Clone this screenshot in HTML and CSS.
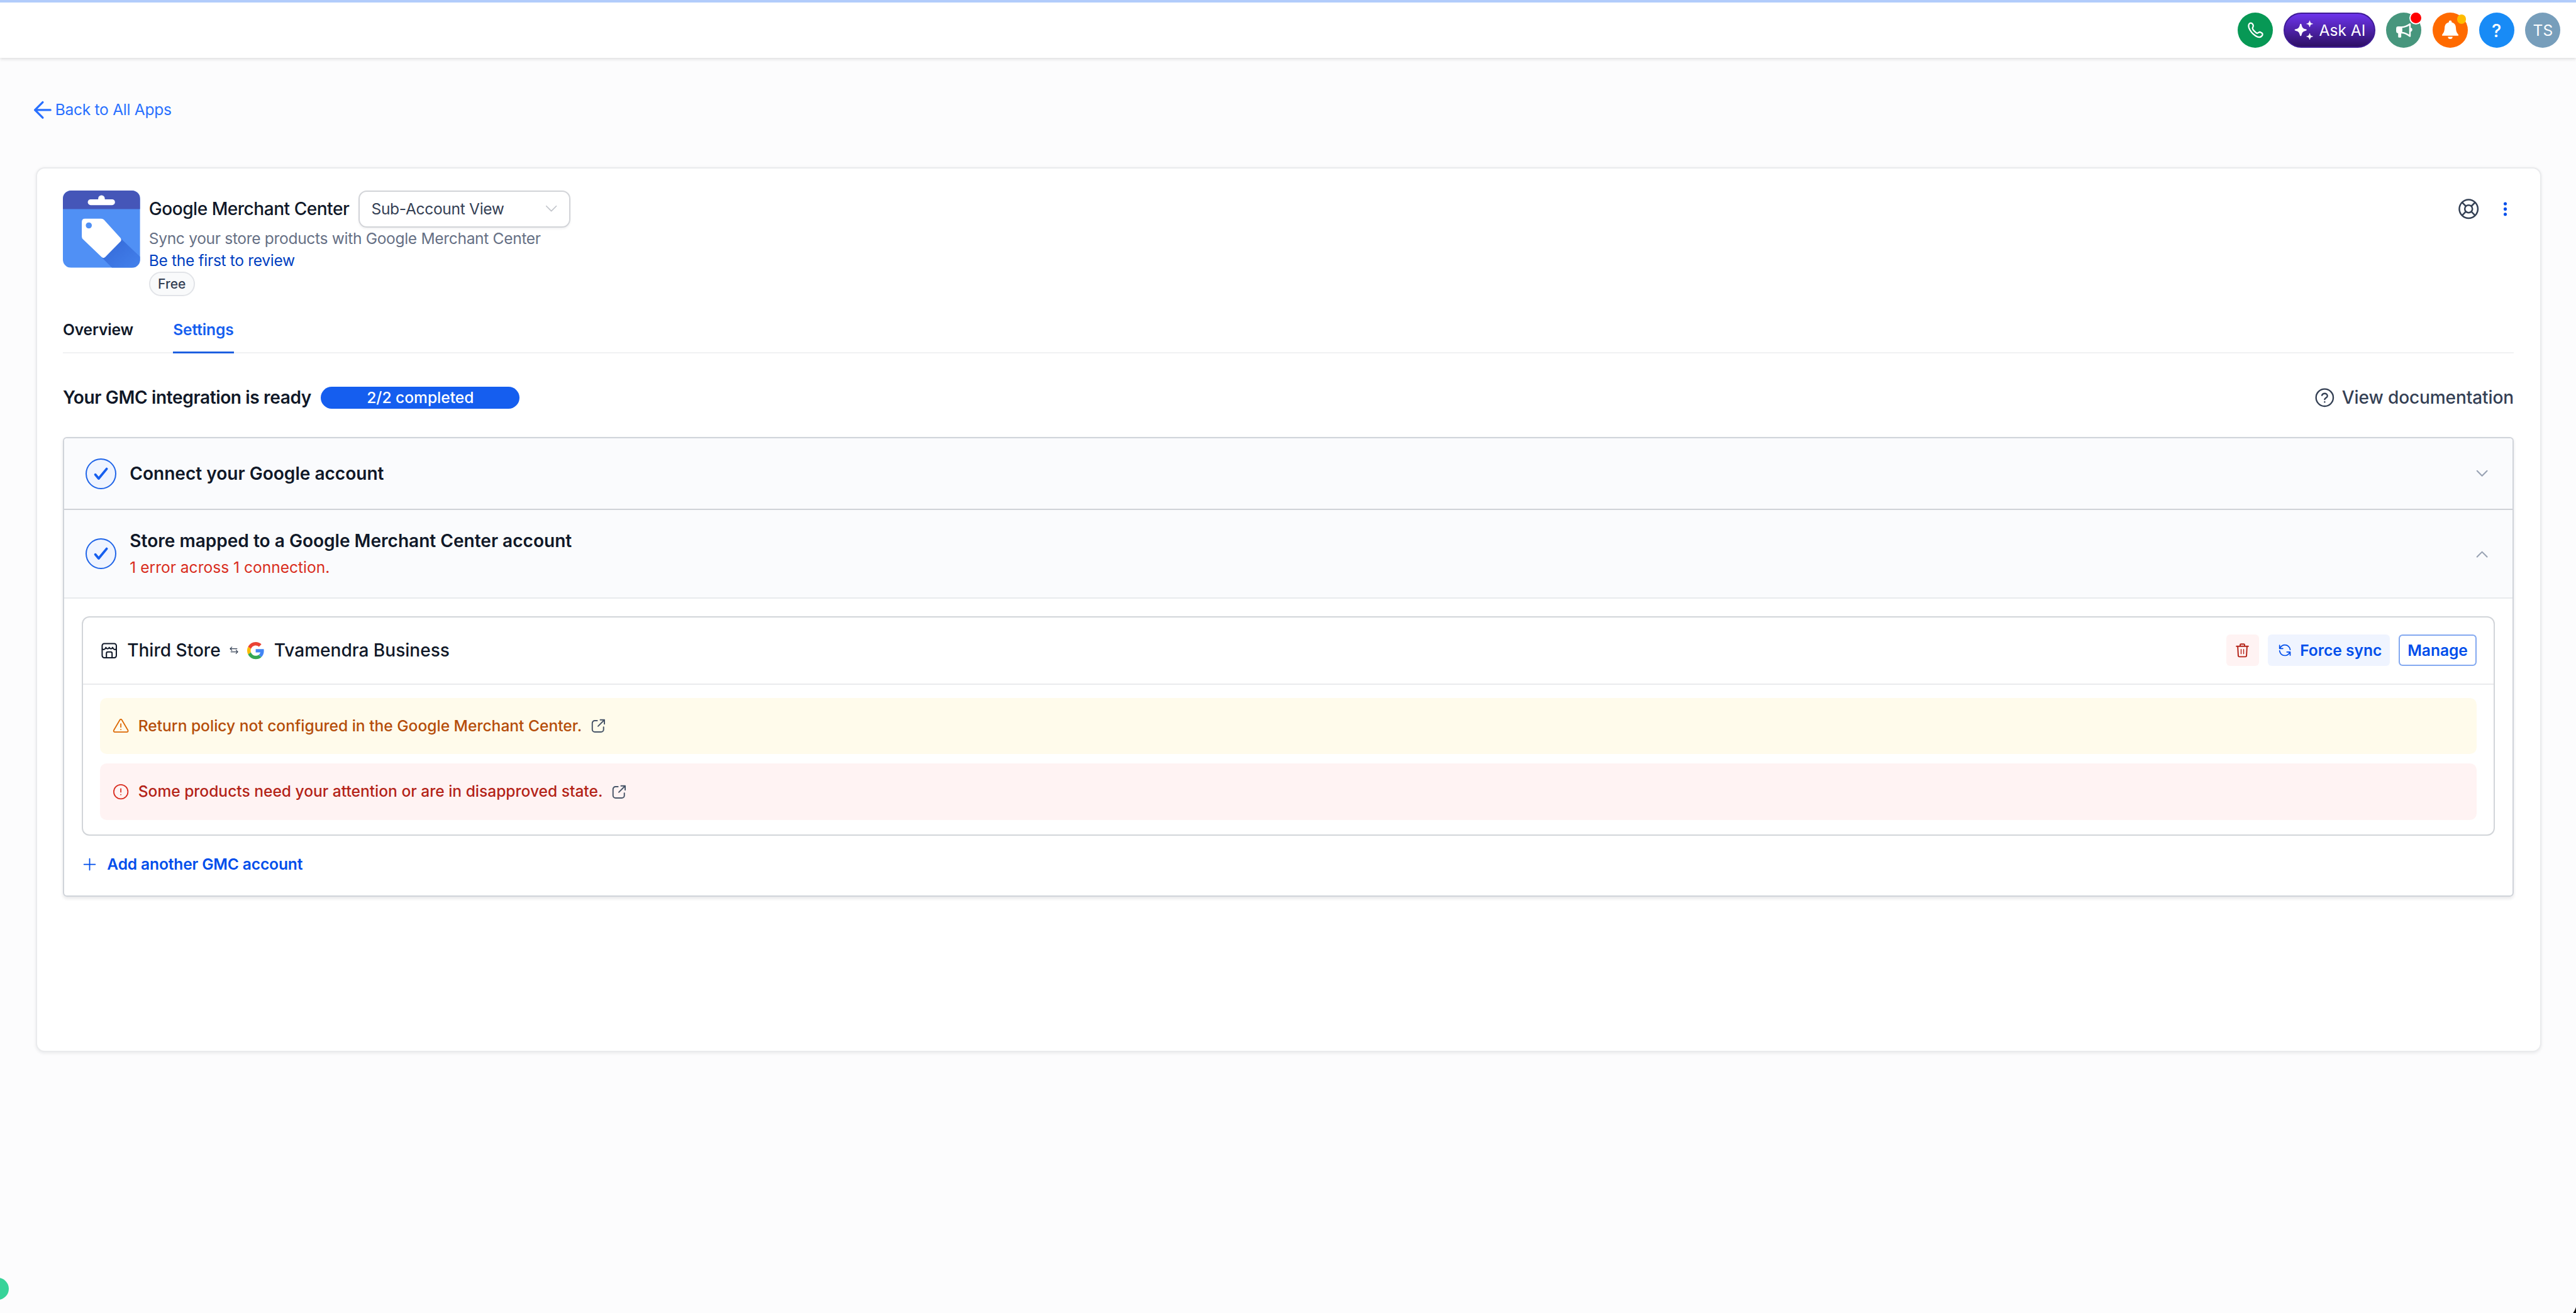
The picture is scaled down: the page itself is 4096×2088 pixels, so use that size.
FILE: index.html
```html
<!DOCTYPE html>
<html lang="en">
<head>
<meta charset="utf-8">
<title>Google Merchant Center</title>
<link rel="stylesheet" href="styles.css">
</head>
<body>
<header class="topbar">
  <button class="round green" aria-label="Phone">
    <svg viewBox="0 0 64 64" fill="none" stroke="#fff" stroke-width="2.6" stroke-linejoin="round"><path d="M20.3 21.5C21.5 18.6 25 18 26.7 20.3L28 22.4C29.3 24.6 27.4 26.2 27 28.3C26.8 30.7 32.4 36.6 35.3 37.4C37.5 37.5 38.6 34.6 41.2 35.5L43.9 37C46 38.4 45.3 41 43.6 42.6C40.8 45.6 37 45.2 32.5 42.2C26.800 38.400 22.500 33 20.400 27.500C19.600 25.200 19.500 23.400 20.300 21.500Z"/></svg>
  </button>
  <button class="ask">
    <svg class="spark" viewBox="0 0 36 36" fill="#fff"><path d="M11.700 6.700c1 0 1.300.8 1.700 2.300 1.200 4.600 2.500 6 7 7.200 1.500.4 2.300.7 2.300 1.600s-.8 1.200-2.300 1.600c-4.500 1.200-5.800 2.600-7 7.200-.4 1.500-.7 2.300-1.700 2.300s-1.300-.8-1.700-2.300c-1.200-4.600-2.500-6-7-7.200C1.500 19 .7 18.700.7 17.800s.8-1.200 2.300-1.600c4.500-1.200 5.800-2.600 7-7.200.4-1.500.7-2.300 1.700-2.300z"/><path d="M28 1c.8 3.800 1.800 4.800 5.600 5.700-3.800.9-4.800 1.900-5.600 5.700-.8-3.800-1.800-4.800-5.600-5.700C26.200 5.800 27.200 4.800 28 1zM28 24c.8 3.800 1.800 4.800 5.600 5.700-3.800.9-4.800 1.900-5.600 5.700-.8-3.800-1.800-4.800-5.600-5.700 3.800-.9 4.800-1.900 5.600-5.700z" stroke="#fff" stroke-width=".8" stroke-linejoin="round"/></svg>
    <span>Ask AI</span>
  </button>
  <button class="round teal" aria-label="Announcements">
    <svg viewBox="0 0 64 64"><path d="M22 25h6.500v12.500h-1v6a1.800 1.800 0 0 1-1.800 1.800h-2a1.800 1.800 0 0 1-1.800-1.800v-6A3.700 3.700 0 0 1 18.300 34v-5.300A3.700 3.700 0 0 1 22 25z" fill="#fff"/><path d="M28 26.400c6.500 0 11-2.400 15.300-5.600v22c-4.300-3.400-8.800-6.400-15.300-6.400z" fill="none" stroke="#fff" stroke-width="2.800" stroke-linejoin="round"/><path d="M44 27.500a3.500 3.500 0 0 1 0 7z" fill="#fff"/></svg>
    <i class="dot dot-red"></i>
  </button>
  <button class="round orange" aria-label="Notifications">
    <svg viewBox="0 0 64 64" fill="#fff"><path d="M32 14.300a2.600 2.600 0 0 1 2.600 2.700v.8c5 1.200 7.400 5 7.600 9.700.3 6 1.400 9.300 4.200 12 1 1 .5 2.500-1 2.500H18.600c-1.500 0-2-1.500-1-2.500 2.800-2.700 3.900-6 4.200-12 .2-4.700 2.600-8.500 7.600-9.700V17a2.600 2.600 0 0 1 2.600-2.700zM27.800 44h8.400a4.200 4 0 0 1-8.400 0z"/></svg>
    <i class="dot dot-amber"></i>
  </button>
  <button class="round blue">?</button>
  <button class="round avatar">TS</button>
</header>

<main class="page">
  <a class="back">
    <svg viewBox="0 0 34 34" fill="none" stroke="currentColor" stroke-width="3.800" stroke-linecap="round" stroke-linejoin="round"><path d="M31 17H3M17 3 3 17l14 14"/></svg>
    <span>Back to All Apps</span>
  </a>

  <section class="card">
    <div class="app">
      <svg class="app-logo" viewBox="0 0 140 140">
        <defs>
          <clipPath id="r"><rect width="140" height="140" rx="15"/></clipPath>
          <linearGradient id="s" x1="0" y1="0" x2="1" y2="1"><stop offset="0" stop-color="#3367d6"/><stop offset="1" stop-color="#4381ec"/></linearGradient>
        </defs>
        <g clip-path="url(#r)">
          <path fill="#5090f5" d="M0 0h140v140H0z"/>
          <path fill="#4556b8" d="M0 0h140v33.500H0z"/>
          <path fill="url(#s)" d="M105 87l35 33v20H89l-19-19z"/>
          <path fill="#fff" d="M50.300 16H64v-1.500a6 6 0 0 1 12 0V16h13.300a5.200 5.200 0 0 1 0 10.400h-39a5.200 5.200 0 0 1 0-10.400z"/>
          <path fill="#fff" fill-rule="evenodd" d="M40 51h29.500q3 0 5 2L104.500 86q2.500 3.500 0 6.500L76.500 121q-3 2.500-6 0L36.500 88.500q-2.200-2.200-2.200-5V57q0-6 5.700-6zM47 57.800a5.500 5.500 0 1 0 0 11 5.500 5.500 0 1 0 0-11z"/>
        </g>
      </svg>
      <div class="app-info">
        <div class="title-row">
          <h1>Google Merchant Center</h1>
          <div class="select"><span>Sub-Account View</span>
            <svg viewBox="0 0 22 14" fill="none" stroke="#c2c5cb" stroke-width="2" stroke-linecap="round" stroke-linejoin="round"><path d="M2 2l9 9 9-9"/></svg>
          </div>
        </div>
        <p class="desc">Sync your store products with Google Merchant Center</p>
        <a class="review">Be the first to review</a>
        <span class="free">Free</span>
      </div>
      <div class="app-actions">
        <svg class="buoy" viewBox="0 0 37 37" fill="none" stroke="#344054" stroke-width="2.900"><circle cx="18.500" cy="18.500" r="16.800"/><circle cx="18.500" cy="18.500" r="6.900"/><path d="M6.700 6.700l7 7M23.300 23.300l7 7M30.300 6.700l-7 7M13.700 23.300l-7 7"/></svg>
        <svg class="dots" viewBox="0 0 8 26" fill="#004eeb"><circle cx="4" cy="3.400" r="2.900"/><circle cx="4" cy="13" r="2.900"/><circle cx="4" cy="22.600" r="2.900"/></svg>
      </div>
    </div>

    <nav class="tabs">
      <a class="tab">Overview</a>
      <a class="tab active">Settings</a>
    </nav>

    <div class="status">
      <h2>Your GMC integration is ready</h2>
      <span class="progress">2/2 completed</span>
      <a class="docs">
        <svg viewBox="0 0 35 35" fill="none" stroke="currentColor" stroke-width="2.700" stroke-linecap="round" stroke-linejoin="round"><circle cx="17.500" cy="17.500" r="15.600"/><path d="M12.600 13.300c.8-2.200 2.700-3.300 4.900-3.300 2.900 0 5 1.900 5 4.400 0 3.200-5 3.700-5 6.300"/><path d="M17.500 25.300v.1"/></svg>
        <span>View documentation</span>
      </a>
    </div>

    <div class="steps">
      <div class="step step-one">
        <span class="check"><svg viewBox="0 0 26 24" fill="none" stroke="#155eef" stroke-width="4.400" stroke-linecap="round" stroke-linejoin="round"><path d="M3 13.500l6 7L23.500 3"/></svg></span>
        <h3>Connect your Google account</h3>
        <svg class="chev" viewBox="0 0 22 14" fill="none" stroke="#98a2b3" stroke-width="2.400" stroke-linecap="round" stroke-linejoin="round"><path d="M2 2l9 9 9-9"/></svg>
      </div>
      <div class="step step-two">
        <span class="check"><svg viewBox="0 0 26 24" fill="none" stroke="#155eef" stroke-width="4.400" stroke-linecap="round" stroke-linejoin="round"><path d="M3 13.500l6 7L23.500 3"/></svg></span>
        <div class="step-text">
          <h3>Store mapped to a Google Merchant Center account</h3>
          <p class="err">1 error across 1 connection.</p>
        </div>
        <svg class="chev" viewBox="0 0 22 14" fill="none" stroke="#98a2b3" stroke-width="2.400" stroke-linecap="round" stroke-linejoin="round"><path d="M2 12l9-9 9 9"/></svg>
      </div>
      <div class="step-body">
        <div class="conn">
          <div class="conn-head">
            <svg class="store" viewBox="0 0 30 30" fill="none" stroke="#101828" stroke-width="2.400" stroke-linecap="round" stroke-linejoin="round"><rect x="1.700" y="1.700" width="26.600" height="26.600" rx="4"/><path d="M2.500 12.300c2 1.300 4.900.3 6.200-3.300 1.300 3.300 4.900 3.300 6.300 0 1.400 3.300 5 3.300 6.300 0 1.300 3.600 4.200 4.600 6.200 3.300M9.700 28v-8a2.500 2.500 0 0 1 2.500-2.500h5.600a2.500 2.500 0 0 1 2.500 2.500v8"/></svg>
            <span class="name">Third Store</span>
            <svg class="swap" viewBox="0 0 16 14" fill="none" stroke="#344054" stroke-width="1.300" stroke-linecap="round" stroke-linejoin="round"><path d="M4.300 1 1 4.200l3.300 3.200M1 4.200h12.500M11.700 6.600 15 9.800 11.700 13M15 9.800H2.500"/></svg>
            <svg class="google" viewBox="0 0 48 48"><path fill="#EA4335" d="M24 9.500c3.540 0 6.710 1.220 9.210 3.600l6.850-6.850C35.900 2.380 30.470 0 24 0 14.620 0 6.510 5.380 2.560 13.220l7.980 6.190C12.430 13.720 17.740 9.500 24 9.500z"/><path fill="#4285F4" d="M46.980 24.550c0-1.570-.15-3.090-.38-4.550H24v9.020h12.940c-.58 2.960-2.260 5.480-4.780 7.180l7.730 6c4.510-4.180 7.090-10.360 7.090-17.650z"/><path fill="#FBBC05" d="M10.530 28.590c-.48-1.450-.76-2.990-.76-4.590s.27-3.140.76-4.590l-7.980-6.190C.92 16.460 0 20.120 0 24s.92 7.540 2.560 10.780l7.970-6.190z"/><path fill="#34A853" d="M24 48c6.480 0 11.930-2.130 15.890-5.810l-7.730-6c-2.150 1.450-4.920 2.300-8.160 2.300-6.260 0-11.570-4.220-13.470-9.910l-7.980 6.190C6.510 42.620 14.620 48 24 48z"/></svg>
            <span class="name">Tvamendra Business</span>
            <div class="conn-actions">
              <button class="del" aria-label="Delete"><svg viewBox="0 0 24 26" fill="none" stroke="#b42318" stroke-width="2.200" stroke-linecap="round" stroke-linejoin="round"><path d="M1.300 5.500h21.400M8 5.300V3a1.500 1.500 0 0 1 1.500-1.500h5A1.500 1.500 0 0 1 16 3v2.300M3.600 5.800l.9 16.500a2.200 2.200 0 0 0 2.200 2.100h10.600a2.200 2.200 0 0 0 2.200-2.100l.9-16.500"/><path d="M9.700 11v8M14.300 11v8" stroke-width="1.600"/></svg></button>
              <button class="sync"><svg viewBox="0 0 24 24" fill="none" stroke="#004eeb" stroke-width="2" stroke-linecap="round" stroke-linejoin="round"><path d="M2 2.500v6.200h6.200M2.400 8.500C4.500 4.500 7.800 2 12 2c5.500 0 9.500 4 10 9M22 21.500v-6.200h-6.200M21.600 15.500C19.500 19.500 16.200 22 12 22 6.500 22 2.500 18 2 13"/></svg><span>Force sync</span></button>
              <button class="manage">Manage</button>
            </div>
          </div>
          <div class="alerts">
            <div class="alert warn">
              <svg class="a-icon" viewBox="0 0 30 30" fill="none" stroke="#dc6803" stroke-width="2" stroke-linecap="round" stroke-linejoin="round"><path d="M13.100 4.500 2.200 23.100a2.200 2.200 0 0 0 1.900 3.300h21.800a2.200 2.200 0 0 0 1.900-3.300L16.900 4.500a2.200 2.200 0 0 0-3.800 0zM15 11.500v6M15 21.800v.1"/></svg>
              <span>Return policy not configured in the Google Merchant Center.</span>
              <svg class="ext" viewBox="0 0 26 26" fill="none" stroke="#475467" stroke-width="2.200" stroke-linecap="round" stroke-linejoin="round"><path d="M16.500 2H24v7.500M24 2 12.500 13.500M11 3.500H6.500A4.500 4.500 0 0 0 2 8v11.500A4.500 4.500 0 0 0 6.500 24H18a4.500 4.500 0 0 0 4.500-4.500V15"/></svg>
            </div>
            <div class="alert bad">
              <svg class="a-icon" viewBox="0 0 30 30" fill="none" stroke="#d92d20" stroke-width="2" stroke-linecap="round"><circle cx="15" cy="15" r="12.800"/><path d="M15 9.500v6M15 20v.1"/></svg>
              <span>Some products need your attention or are in disapproved state.</span>
              <svg class="ext" viewBox="0 0 26 26" fill="none" stroke="#475467" stroke-width="2.200" stroke-linecap="round" stroke-linejoin="round"><path d="M16.500 2H24v7.500M24 2 12.500 13.500M11 3.500H6.500A4.500 4.500 0 0 0 2 8v11.500A4.500 4.500 0 0 0 6.500 24H18a4.500 4.500 0 0 0 4.500-4.500V15"/></svg>
            </div>
          </div>
        </div>
        <a class="add">
          <svg viewBox="0 0 26 26" fill="none" stroke="currentColor" stroke-width="2.200" stroke-linecap="round"><path d="M13 2v22M2 13h22"/></svg>
          <span>Add another GMC account</span>
        </a>
      </div>
    </div>
  </section>
</main>
<i class="widget"></i>
<svg class="corner" viewBox="0 0 6 12"><path d="M6 0v12H0Q4 7 6 0z" fill="#111"/></svg>
</body>
</html>
```
FILE: styles.css
```css
/* 1rem = 10 layout units; the window is 467 units wide */
html { font-size: 8.7709px; }
* { box-sizing: border-box; }
body {
  margin: 0;
  height: 238.1rem;
  position: relative;
  overflow: hidden;
  background: #fcfcfd;
  font-family: Inter, "Liberation Sans", sans-serif;
  font-size: 2.8rem;
  line-height: 4rem;
  color: #101828;
}
h1, h2, h3, p { margin: 0; font-size: 3.2rem; }
button { border: 0; padding: 0; margin: 0; font: inherit; background: none; }
svg { display: block; flex: none; overflow: visible; }

.topbar {
  height: 10.5rem;
  border-top: 0.5rem solid #b2ccfb;
  background: #fff;
  box-shadow: 0 0.2rem 0.6rem rgba(0, 0, 0, 0.13);
  display: flex;
  align-items: center;
  justify-content: flex-end;
  gap: 2rem;
  padding-right: 2.8rem;
}
.round {
  position: relative;
  width: 6.4rem;
  height: 6.4rem;
  border-radius: 50%;
  color: #fff;
  text-align: center;
}
.round svg { width: 100%; height: 100%; }
.green { background: #079855; }
.teal { background: #47967d; }
.orange { background: #ff6a00; }
.blue { background: #188bf6; font-size: 3.3rem; font-weight: 500; }
.avatar { background: #779ebb; }
.dot { position: absolute; border-radius: 50%; }
.dot-red { width: 2.4rem; height: 2.4rem; left: 4.2rem; top: -0.2rem; background: #f00; border: 2px solid #fff; }
.dot-amber { width: 1.6rem; height: 1.6rem; left: 4.4rem; top: 0.4rem; background: #ffbc00; }
.ask {
  width: 16.6rem;
  height: 6.4rem;
  border-radius: 3.2rem;
  border: 2px solid #3f1c96;
  background: linear-gradient(#6d34ec, #2e1065);
  color: #fff;
  display: flex;
  align-items: center;
  gap: 0.9rem;
  padding-left: 1.7rem;
  white-space: nowrap;
}
.spark { width: 3.6rem; height: 3.6rem; }

.page { padding: 7.4rem 6.3rem 0 6.5rem; }
.back {
  display: flex;
  align-items: center;
  gap: 0.6rem;
  width: max-content;
  margin-left: -0.5rem;
  color: #2970ff;
  letter-spacing: -0.011em;
}
.back svg { width: 3.4rem; height: 3.4rem; }

.card {
  margin-top: 8.4rem;
  height: 160.5rem;
  padding: 3.97rem 4.75rem 0 4.67rem;
  border: 2px solid #eaebed;
  border-radius: 1.6rem;
  background: #fff;
  box-shadow: 0 0.2rem 0.6rem rgba(16, 24, 40, 0.08);
}
.app { display: flex; align-items: flex-start; height: 19.2rem; }
.app-logo { width: 14rem; height: 14rem; }
.app-info { margin-left: 1.6rem; display: flex; flex-direction: column; align-items: flex-start; letter-spacing: -0.013em; }
.title-row { display: flex; align-items: center; height: 6.8rem; }
h1 { width: 38rem; font-weight: 500; white-space: nowrap; letter-spacing: -0.017em; }
.select {
  width: 38.4rem;
  height: 6.8rem;
  border: 2px solid #d2d4d8;
  border-radius: 1.5rem;
  box-shadow: 0 0.2rem 0.4rem rgba(16, 24, 40, 0.06);
  display: flex;
  align-items: center;
  justify-content: space-between;
  padding: 0 2.1rem 0 2.1rem;
  color: #344054;
}
.select svg { width: 2.2rem; height: 1.4rem; }
.desc { font-size: 2.8rem; color: #667085; }
.review { color: #0040c1; }
.free {
  height: 4.4rem;
  line-height: 4rem;
  padding: 0 1.4rem;
  border: 2px solid #e2e4e8;
  border-radius: 2.2rem;
  background: #f9fafb;
  font-size: 2.4rem;
  font-weight: 500;
  letter-spacing: 0;
  color: #344054;
}
.app-actions { margin-left: auto; height: 6.8rem; display: flex; align-items: center; gap: 4.4rem; padding-right: 1.1rem; }
.buoy { width: 3.7rem; height: 3.7rem; }
.dots { width: 0.8rem; height: 2.6rem; }

.tabs {
  height: 10.4rem;
  display: flex;
  gap: 7.2rem;
  border-bottom: 2px solid #f0f1f3;
}
.tab { height: 10.4rem; padding-top: 4.1rem; font-weight: 600; letter-spacing: -0.005em; }
.tab.active { color: #155eef; border-bottom: 0.4rem solid #1d5fe0; }

.status { display: flex; align-items: center; height: 15.2rem; padding-top: 0.8rem; }
h2 { width: 46.8rem; font-weight: 600; white-space: nowrap; letter-spacing: -0.013em; }
.progress {
  width: 36rem;
  height: 4rem;
  border-radius: 2rem;
  background: #155eef;
  color: #fff;
  text-align: center;
  font-weight: 500;
}
.docs {
  margin-left: auto;
  display: flex;
  align-items: center;
  gap: 1.4rem;
  font-size: 3.2rem;
  font-weight: 500;
  letter-spacing: -0.004em;
  color: #344054;
}
.docs svg { width: 3.5rem; height: 3.5rem; }

.steps {
  height: 83.3rem;
  border: 2px solid #d0d4da;
  border-radius: 0.7rem;
  box-shadow: 0 0.3rem 0.6rem rgba(16, 24, 40, 0.1);
  overflow: hidden;
}
.step { display: flex; align-items: center; padding: 0 4.4rem 0 3.9rem; background: #fafbfd; }
.step-one { height: 13rem; border-bottom: 2px solid #cfd2d7; }
.step-two { height: 16rem; border-bottom: 2px solid #e8eaed; }
.check {
  width: 5.6rem;
  height: 5.6rem;
  margin-right: 2.4rem;
  border: 2px solid #2065e8;
  border-radius: 50%;
  background: #eff4ff;
  display: grid;
  place-items: center;
}
.check svg { width: 2.6rem; height: 2.4rem; }
h3 { font-weight: 600; line-height: 4.8rem; }
.err { font-size: 2.8rem; line-height: 4.8rem; color: #d92d20; }
.chev { width: 2.2rem; height: 1.4rem; margin-left: auto; }

.step-body { padding: 3.2rem 3.2rem 0; }
.conn { height: 39.8rem; border: 2px solid #d2d5d9; border-radius: 1.4rem; }
.conn-head {
  height: 12.2rem;
  display: flex;
  align-items: center;
  padding: 0 3.1rem 0 3.3rem;
  border-bottom: 2px solid #eaebed;
}
.name { font-size: 3.2rem; font-weight: 500; }
.store { width: 2.9rem; height: 2.9rem; margin-right: 1.8rem; }
.swap { width: 1.6rem; height: 1.4rem; margin: 0 1.6rem; }
.google { width: 3.1rem; height: 3.1rem; margin-right: 1.8rem; }
.conn-actions { margin-left: auto; display: flex; align-items: center; gap: 1.6rem; font-weight: 600; color: #004eeb; }
.del, .sync, .manage { height: 5.7rem; border-radius: 0.7rem; color: #004eeb; }
.del { width: 6rem; background: #fff3f3; display: grid; place-items: center; }
.del svg { width: 2.4rem; height: 2.6rem; }
.sync { width: 22.1rem; background: #eff4ff; display: flex; align-items: center; padding-left: 1.9rem; gap: 1.6rem; }
.sync svg { width: 2.3rem; height: 2.3rem; }
.manage { width: 14.1rem; border: 2px solid #84a9f0; background: #fff; }
.alerts { display: flex; flex-direction: column; gap: 1.7rem; padding: 2.4rem 3.1rem 0; }
.alert { height: 10.2rem; border-radius: 1.2rem; display: flex; align-items: center; padding-left: 2.3rem; font-weight: 500; }
.warn { background: #fffbeb; color: #b54d09; }
.bad { background: #fff3f3; color: #b42318; }
.a-icon { width: 3rem; height: 3rem; margin-right: 1.6rem; }
.ext { width: 2.6rem; height: 2.6rem; margin-left: 1.7rem; }
.add { display: flex; align-items: center; gap: 2rem; margin-top: 3.2rem; padding-left: 0.2rem; color: #004eeb; font-weight: 600; letter-spacing: -0.006em; }
.add svg { width: 2.4rem; height: 2.4rem; }

.widget { position: absolute; left: -2.4rem; top: 231.7rem; width: 4rem; height: 4rem; border-radius: 50%; background: #37d399; }
.corner { position: absolute; right: 0; bottom: 0; width: 0.6rem; height: 1.2rem; }
```
